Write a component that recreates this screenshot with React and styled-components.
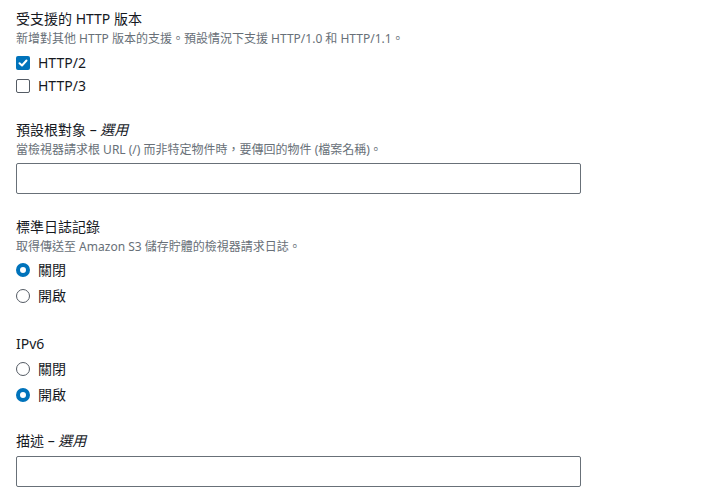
import React, { useState } from "react";
import styled, { createGlobalStyle } from "styled-components";

const GlobalStyle = createGlobalStyle`
  body {
    margin: 0;
    background: #ffffff;
    font-family: "Noto Sans", "Open Sans", "Noto Sans CJK TC", sans-serif;
    color: #16191f;
  }
`;

function App() {
  const [http2, setHttp2] = useState(true);
  const [http3, setHttp3] = useState(false);
  const [logging, setLogging] = useState("off");
  const [ipv6, setIpv6] = useState("on");

  return (
    <>
      <GlobalStyle />
      <Page>
        <Section>
          <Label>受支援的 HTTP 版本</Label>
          <Description>新增對其他 HTTP 版本的支援。預設情況下支援 HTTP/1.0 和 HTTP/1.1。</Description>
          <OptionList spaced>
            <CheckRow onClick={() => setHttp2(!http2)}>
              <CheckBox checked={http2}>
                {http2 && (
                  <svg width="10" height="10" viewBox="0 0 10 10">
                    <path d="M1.5 5.2 L4 7.5 L8.5 2.5" fill="none" stroke="#fff" strokeWidth="2" strokeLinecap="round" strokeLinejoin="round" />
                  </svg>
                )}
              </CheckBox>
              <OptionText>HTTP/2</OptionText>
            </CheckRow>
            <CheckRow onClick={() => setHttp3(!http3)}>
              <CheckBox checked={http3} />
              <OptionText>HTTP/3</OptionText>
            </CheckRow>
          </OptionList>
        </Section>

        <Section>
          <Label>
            預設根對象 – <Optional>選用</Optional>
          </Label>
          <Description>當檢視器請求根 URL (/) 而非特定物件時，要傳回的物件 (檔案名稱)。</Description>
          <TextInput />
        </Section>

        <Section>
          <Label>標準日誌記錄</Label>
          <Description>取得傳送至 Amazon S3 儲存貯體的檢視器請求日誌。</Description>
          <OptionList>
            <RadioRow onClick={() => setLogging("off")}>
              <Radio checked={logging === "off"} />
              <OptionText>關閉</OptionText>
            </RadioRow>
            <RadioRow onClick={() => setLogging("on")}>
              <Radio checked={logging === "on"} />
              <OptionText>開啟</OptionText>
            </RadioRow>
          </OptionList>
        </Section>

        <Section offset={2}>
          <Label>IPv6</Label>
          <OptionList>
            <RadioRow onClick={() => setIpv6("off")}>
              <Radio checked={ipv6 === "off"} />
              <OptionText>關閉</OptionText>
            </RadioRow>
            <RadioRow onClick={() => setIpv6("on")}>
              <Radio checked={ipv6 === "on"} />
              <OptionText>開啟</OptionText>
            </RadioRow>
          </OptionList>
        </Section>

        <Section>
          <Label>
            描述 – <Optional>選用</Optional>
          </Label>
          <TextInput />
        </Section>
      </Page>
    </>
  );
}

export default App;

const Page = styled.div`
  display: flex;
  flex-direction: column;
  row-gap: 23px;
  padding: 9px 16px 0 16px;
  width: 565px;
`;

const Section = styled.div`
  display: flex;
  flex-direction: column;
  margin-top: ${(props) => props.offset || 0}px;
`;

const Label = styled.div`
  font-size: 14px;
  line-height: 20px;
  color: #16191f;
`;

const Optional = styled.i`
  font-style: italic;
`;

const Description = styled.div`
  margin-top: 2px;
  font-size: 12px;
  line-height: 16px;
  color: #687078;
`;

const OptionList = styled.div`
  display: flex;
  flex-direction: column;
  margin-top: ${(props) => (props.spaced ? "4px" : "2px")};
`;

const CheckRow = styled.label`
  display: flex;
  align-items: center;
  column-gap: 8px;
  height: 23px;
  cursor: pointer;
`;

const RadioRow = styled(CheckRow)`
  height: 26px;
`;

const CheckBox = styled.span`
  box-sizing: border-box;
  width: 14px;
  height: 14px;
  border-radius: 2px;
  display: flex;
  align-items: center;
  justify-content: center;
  background: ${(props) => (props.checked ? "#0073bb" : "#ffffff")};
  border: ${(props) => (props.checked ? "none" : "1px solid #545b64")};
`;

const Radio = styled.span`
  box-sizing: border-box;
  width: 14px;
  height: 14px;
  border-radius: 50%;
  background: #ffffff;
  border: ${(props) => (props.checked ? "4px solid #0073bb" : "1px solid #545b64")};
`;

const OptionText = styled.span`
  font-size: 14px;
  line-height: 20px;
  color: #16191f;
`;

const TextInput = styled.input`
  box-sizing: border-box;
  width: 565px;
  height: 31px;
  margin-top: 5px;
  border: 1px solid #687078;
  border-radius: 2px;
  padding: 4px 8px;
  font-family: inherit;
  font-size: 14px;
  outline: none;
`;
